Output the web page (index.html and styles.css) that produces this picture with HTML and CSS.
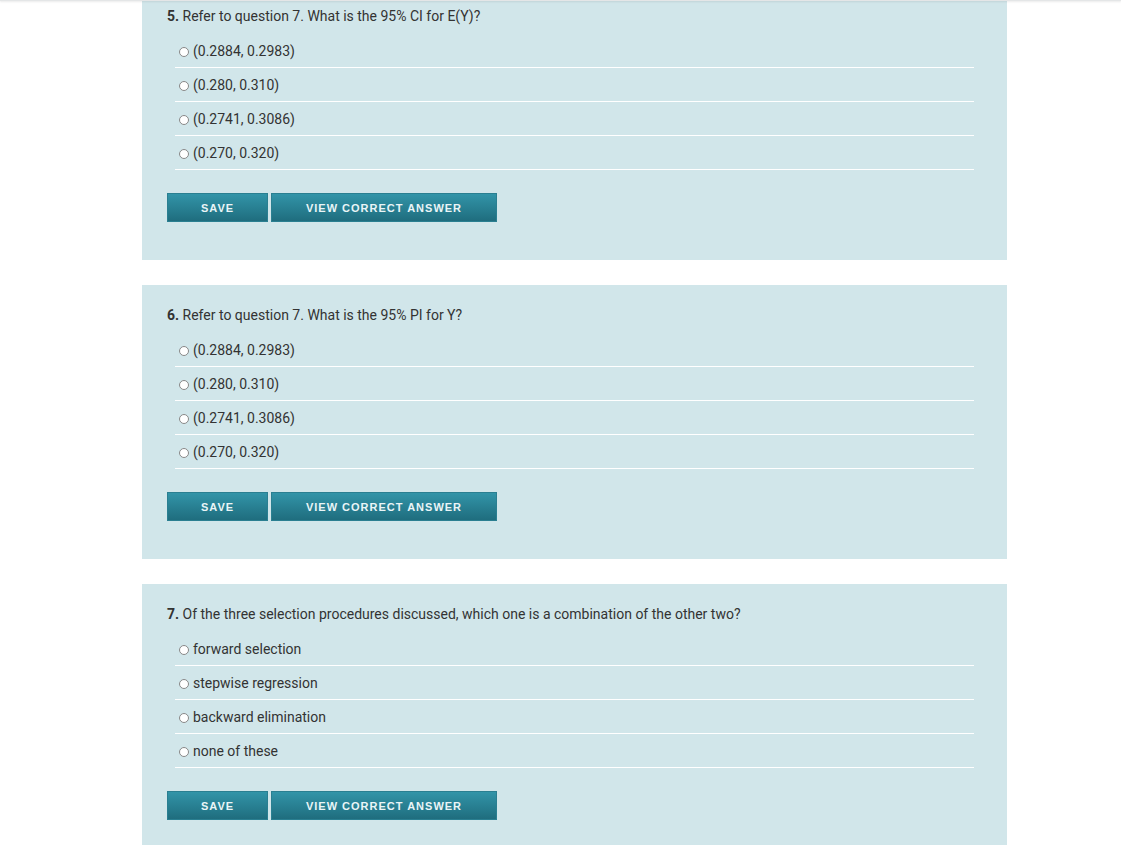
FILE: index.html
```html
<!DOCTYPE html>
<html lang="en">
<head>
  <meta charset="UTF-8">
  <title>Quiz</title>
  <link rel="stylesheet" href="styles.css">
</head>
<body>
  <div class="topline"></div>
  <div class="quiz">
    <div class="question first">
      <div class="q-title"><b>5.</b> Refer to question 7. What is the 95% CI for E(Y)?</div>
      <ul class="options">
        <li><span class="radio"></span>(0.2884, 0.2983)</li>
        <li><span class="radio"></span>(0.280, 0.310)</li>
        <li><span class="radio"></span>(0.2741, 0.3086)</li>
        <li><span class="radio"></span>(0.270, 0.320)</li>
      </ul>
      <div class="actions">
        <button class="btn save">Save</button>
        <button class="btn view">View correct answer</button>
      </div>
    </div>

    <div class="question">
      <div class="q-title"><b>6.</b> Refer to question 7. What is the 95% PI for Y?</div>
      <ul class="options">
        <li><span class="radio"></span>(0.2884, 0.2983)</li>
        <li><span class="radio"></span>(0.280, 0.310)</li>
        <li><span class="radio"></span>(0.2741, 0.3086)</li>
        <li><span class="radio"></span>(0.270, 0.320)</li>
      </ul>
      <div class="actions">
        <button class="btn save">Save</button>
        <button class="btn view">View correct answer</button>
      </div>
    </div>

    <div class="question">
      <div class="q-title"><b>7.</b> Of the three selection procedures discussed, which one is a combination of the other two?</div>
      <ul class="options">
        <li><span class="radio"></span>forward selection</li>
        <li><span class="radio"></span>stepwise regression</li>
        <li><span class="radio"></span>backward elimination</li>
        <li><span class="radio"></span>none of these</li>
      </ul>
      <div class="actions">
        <button class="btn save">Save</button>
        <button class="btn view">View correct answer</button>
      </div>
    </div>
  </div>
</body>
</html>
```

FILE: styles.css
```css
body {
  margin: 0;
  background: #fff;
  color: #333;
  font-family: Roboto, "Liberation Sans", Arial, sans-serif;
  font-size: 14px;
}
.topline {
  position: fixed;
  top: 0;
  left: 0;
  right: 0;
  height: 1px;
  background: #e4e6e7;
  box-shadow: 0 1px 2px rgba(0, 0, 0, 0.12);
}
.quiz {
  width: 865px;
  margin-left: 142px;
}
.question {
  background: #d1e6ea;
  padding: 20px 25px 38px;
  margin-bottom: 25px;
}
.question.first {
  margin-top: -14px;
}
.q-title {
  line-height: 20px;
  margin-bottom: 8px;
}
.q-title b {
  font-weight: bold;
}
.options {
  list-style: none;
  margin: 0 8px;
  padding: 0;
}
.options li {
  display: flex;
  align-items: center;
  line-height: 20px;
  padding: 7px 0 6px 4px;
  border-bottom: 1px solid #fff;
}
.radio {
  width: 8px;
  height: 8px;
  border: 1px solid #888;
  border-radius: 50%;
  background: #fff;
  margin-right: 4px;
  margin-top: 1px;
}
.actions {
  display: flex;
  gap: 3px;
  margin-top: 23px;
}
.btn {
  height: 29px;
  border: 1px solid #2a7f91;
  background: linear-gradient(to bottom, #3294a8, #1f6d7e);
  color: #eaf5f7;
  font-family: "Liberation Sans", Arial, sans-serif;
  font-size: 11px;
  font-weight: bold;
  letter-spacing: 1px;
  text-transform: uppercase;
  cursor: pointer;
}
.save {
  width: 101px;
}
.view {
  width: 226px;
}
```
